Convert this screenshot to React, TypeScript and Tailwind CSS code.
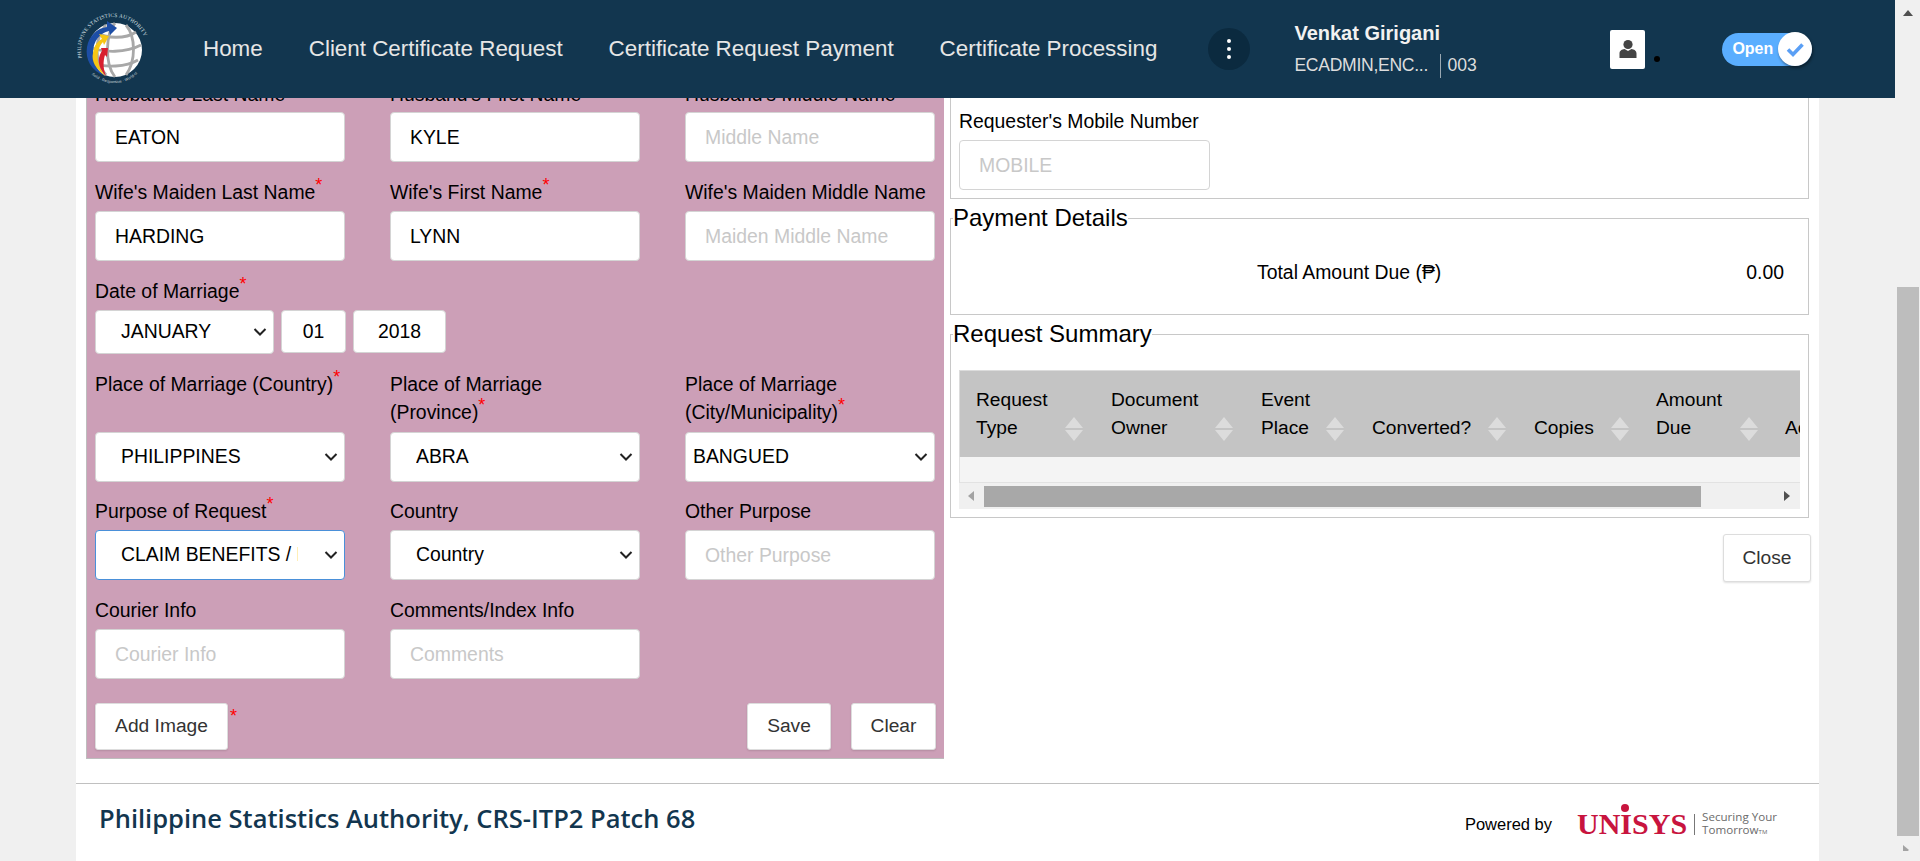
import React from "react";

const sans = "font-['Liberation_Sans',Arial,sans-serif]";
const fieldCls =
  "h-[50px] w-[250px] rounded-[4px] border border-[#d4d4d4] bg-white pl-[19px] text-[19.4px] text-black outline-none placeholder:text-[#c8c8c8]";
const btnCls =
  "h-[47px] rounded-[3px] border border-[#dddddd] bg-white text-[19.2px] text-[#333333] shadow-[0_1px_2px_rgba(0,0,0,0.12)]";

function Star() {
  return <span className="relative -top-[8px] text-[18px] leading-none text-[#ff0000]">*</span>;
}

function Label({ text, req, className = "" }: { text: React.ReactNode; req?: boolean; className?: string }) {
  return (
    <label className={"block text-[19.4px] leading-[28px] text-black " + className}>
      {text}
      {req && <Star />}
    </label>
  );
}

// native look of the old chrome select arrow, drawn so it has the right size
function Select({ value, className = "", box = "w-[250px] h-[50px]", border = "border-[#d4d4d4]", pad = "pl-[25px]" }: {
  value: string;
  className?: string;
  box?: string;
  border?: string;
  pad?: string;
}) {
  return (
    <div className={"relative " + box + " " + className}>
      <select
        className={"h-full w-full appearance-none rounded-[4px] border bg-white pr-[46px] text-[19.4px] text-black outline-none " + border + " " + pad}
        defaultValue={value}
      >
        <option>{value}</option>
      </select>
      <svg viewBox="0 0 14 9" className="pointer-events-none absolute top-1/2 right-[7px] h-[9px] w-[14px] -translate-y-1/2">
        <path d="M1.5 1.5 L7 7 L12.5 1.5" fill="none" stroke="#222222" strokeWidth="2" />
      </svg>
    </div>
  );
}

function PsaLogo() {
  return (
    <svg viewBox="0 0 76 76" className="h-[76px] w-[76px] shrink-0">
      <defs>
        <path id="psaTop" d="M6 47 A33 33 0 1 1 70 47" />
        <path id="psaBottom" d="M14 62 A33.5 33.5 0 0 0 62 62" />
      </defs>
      <circle cx="39" cy="39" r="27" fill="#ffffff" />
      <g fill="none" stroke="#a8a8a8" strokeWidth="2.8">
        <path d="M20 21 C30 28 50 28 60 21" />
        <path d="M13 36 C28 42 50 42 65 34" />
        <path d="M16 52 C30 57 50 56 62 49" />
        <path d="M39 12 C30 22 28 52 39 66" />
        <path d="M50 14 C60 26 60 50 50 64" />
        <path d="M30 14 C18 28 18 50 30 64" />
      </g>
      <path d="M29 65 C15 60 9 48 11 36 C13 24 22 17 31 16 L31 10 L41 17 L34 24 L33 20 C24 22 17 30 17 42 C17 52 22 60 29 65Z" fill="#1d4ea6" />
      <path d="M29 65 C20 58 15 50 17 42 C18 34 22 30 26 28 L23 23 L33 25 L28 34 L27 31 C22 36 21 44 22 50 C23 56 26 61 29 65Z" fill="#f7c614" />
      <path d="M30 65 C24 59 22 52 23 47 C24 43 25 41 26 40 L25 37 L32 37 L31 46 L29 44 C27 50 27 58 30 65Z" fill="#d8202f" />
      <text fontSize="5.3" fill="#dfe5e8" fontFamily="'Liberation Serif',serif" letterSpacing="0.25">
        <textPath href="#psaTop">PHILIPPINE STATISTICS AUTHORITY</textPath>
      </text>
      <text fontSize="3.9" fill="#c8d2d8" fontFamily="'Liberation Sans',sans-serif">
        <textPath href="#psaBottom" startOffset="4%">Solid · Responsive · World-class</textPath>
      </text>
    </svg>
  );
}

function Header() {
  return (
    <header className="flex h-[98px] shrink-0 items-center bg-[#12364f] pl-[76px]">
      <PsaLogo />
      <nav className="ml-[51px] flex gap-[46px] text-[22.4px] whitespace-nowrap text-[#e6e6e6]">
        <span>Home</span>
        <span>Client Certificate Request</span>
        <span>Certificate Request Payment</span>
        <span>Certificate Processing</span>
      </nav>
      <div className="ml-[51px] flex h-[42px] w-[42px] shrink-0 flex-col items-center justify-center gap-[4px] rounded-full bg-[#0b2a3f]">
        <i className="h-[4px] w-[4px] rounded-full bg-white" />
        <i className="h-[4px] w-[4px] rounded-full bg-white" />
        <i className="h-[4px] w-[4px] rounded-full bg-white" />
      </div>
      <div className="ml-[44px] w-[316px] shrink-0">
        <div className="text-[20px] leading-[24px] font-bold text-[#f2f2f2]">Venkat Girigani</div>
        <div className="mt-[9px] flex h-[24px] items-center text-[17.6px] whitespace-nowrap text-[#dddddd]">
          <span className="w-[137px] overflow-hidden tracking-[-0.3px]">ECADMIN,ENC...</span>
          <span className="ml-[9px] h-[24px] w-px bg-[#9aa8b2]" />
          <span className="ml-[6px]">003</span>
        </div>
      </div>
      <div className="flex h-[39px] w-[35px] shrink-0 items-center justify-center rounded-[2px] bg-white">
        <svg viewBox="0 0 18 20" className="h-[20px] w-[18px]">
          <circle cx="9" cy="5.5" r="4.6" fill="#444444" />
          <path d="M0.5 19 V14.5 C0.5 11.5 3 10.5 5.5 10 L9 12 L12.5 10 C15 10.5 17.5 11.5 17.5 14.5 V19Z" fill="#444444" />
        </svg>
      </div>
      <i className="mt-[20px] ml-[9px] h-[6px] w-[6px] shrink-0 rounded-full bg-black" />
      <div className="relative ml-[62px] flex h-[33px] w-[90px] shrink-0 items-center rounded-full bg-[#5aaeff] pl-[10px] text-[16px] font-bold text-white">
        Open
        <span className="absolute top-[-1px] right-0 flex h-[34px] w-[34px] items-center justify-center rounded-full bg-white shadow-[1px_2px_3px_rgba(0,0,0,0.45)]">
          <svg viewBox="0 0 20 20" className="h-[20px] w-[20px]">
            <path d="M3 10.5 L8 15.5 L17.5 5.5" fill="none" stroke="#5a9ff5" strokeWidth="3.6" />
          </svg>
        </span>
      </div>
    </header>
  );
}

function RequestForm() {
  return (
    <section className="h-[661px] w-[858px] shrink-0 border-b border-l border-[#bdbdbd] bg-[#cc9fb7] pl-[8px]">
      <div className="-mt-[18px] grid grid-cols-[250px_250px_250px] gap-x-[45px]">
        <Label text="Husband's Last Name" />
        <Label text="Husband's First Name" />
        <Label text="Husband's Middle Name" />
        <input className={"mt-[4px] " + fieldCls} defaultValue="EATON" />
        <input className={"mt-[4px] " + fieldCls} defaultValue="KYLE" />
        <input className={"mt-[4px] " + fieldCls} placeholder="Middle Name" />

        <Label text="Wife's Maiden Last Name" req className="mt-[16px]" />
        <Label text="Wife's First Name" req className="mt-[16px]" />
        <Label text="Wife's Maiden Middle Name" className="mt-[16px] whitespace-nowrap" />
        <input className={"mt-[5px] " + fieldCls} defaultValue="HARDING" />
        <input className={"mt-[5px] " + fieldCls} defaultValue="LYNN" />
        <input className={"mt-[5px] " + fieldCls} placeholder="Maiden Middle Name" />
      </div>

      <Label text="Date of Marriage" req className="mt-[16px]" />
      <div className="mt-[5px] flex items-start gap-[7px]">
        <Select value="JANUARY" box="h-[44px] w-[179px]" />
        <input className="h-[43px] w-[65px] rounded-[4px] border border-[#d4d4d4] bg-white text-center text-[19.4px] text-black outline-none" defaultValue="01" />
        <input className="h-[43px] w-[93px] rounded-[4px] border border-[#d4d4d4] bg-white text-center text-[19.4px] text-black outline-none" defaultValue="2018" />
      </div>

      <div className="mt-[16px] grid grid-cols-[250px_250px_250px] gap-x-[45px]">
        <Label text="Place of Marriage (Country)" req className="h-[56px] whitespace-nowrap" />
        <Label text={<>Place of Marriage<br />(Province)</>} req className="h-[56px]" />
        <Label text={<>Place of Marriage<br />(City/Municipality)</>} req className="h-[56px]" />
        <Select value="PHILIPPINES" className="mt-[6px]" />
        <Select value="ABRA" className="mt-[6px]" />
        <Select value="BANGUED" className="mt-[6px]" pad="pl-[7px]" />

        <Label text="Purpose of Request" req className="mt-[15px]" />
        <Label text="Country" className="mt-[15px]" />
        <Label text="Other Purpose" className="mt-[15px]" />
        <Select value="CLAIM BENEFITS / LOAN" className="mt-[5px]" border="border-[#4a90d9]" />
        <Select value="Country" className="mt-[5px]" />
        <input className={"mt-[5px] " + fieldCls} placeholder="Other Purpose" />

        <Label text="Courier Info" className="mt-[16px]" />
        <Label text="Comments/Index Info" className="mt-[16px]" />
        <span />
        <input className={"mt-[5px] " + fieldCls} placeholder="Courier Info" />
        <input className={"mt-[5px] " + fieldCls} placeholder="Comments" />
      </div>

      <div className="mt-[24px] flex items-start pr-[8px]">
        <button className={"w-[133px] " + btnCls}>Add Image</button>
        <span className="mt-[4px] ml-[2px] text-[18px] leading-none text-[#ff0000]">*</span>
        <button className={"ml-auto w-[84px] " + btnCls}>Save</button>
        <button className={"ml-[20px] w-[85px] " + btnCls}>Clear</button>
      </div>
    </section>
  );
}

const columns = [
  { lines: ["Request", "Type"], cell: "w-[135px]", text: "w-[89px]" },
  { lines: ["Document", "Owner"], cell: "w-[150px]", text: "w-[104px]" },
  { lines: ["Event", "Place"], cell: "w-[111px]", text: "w-[65px]" },
  { lines: ["", "Converted?"], cell: "w-[162px]", text: "w-[116px]" },
  { lines: ["", "Copies"], cell: "w-[122px]", text: "w-[77px]" },
  { lines: ["Amount", "Due"], cell: "w-[129px]", text: "w-[84px]" },
];

function SortIcon() {
  return (
    <svg viewBox="0 0 18 24" className="mb-[1px] h-[24px] w-[18px] shrink-0">
      <path d="M9 0 L18 11 H0Z M0 13 H18 L9 24Z" fill="#dcdcdc" />
    </svg>
  );
}

function RequestSummary() {
  return (
    <fieldset className="mt-[5px] mr-[2px] min-w-0 border border-[#c8c8c8] pb-[8px]">
      <legend className="ml-[2px] text-[24px] leading-[28px] text-black">Request Summary</legend>
      <div className="mx-[8px] mt-[22px] overflow-hidden bg-[#f0f0f0]">
        <div className="flex h-[87px] items-end overflow-hidden border-t border-l border-[#dcdcdc] bg-[#c4c4c4] pb-[15px] pl-[16px] text-[19.2px] leading-[28px] whitespace-nowrap text-black">
          {columns.map((c) => (
            <div key={c.lines[1]} className={"flex shrink-0 items-end " + c.cell}>
              <div className={c.text}>
                <div>{c.lines[0]}</div>
                <div>{c.lines[1]}</div>
              </div>
              <SortIcon />
            </div>
          ))}
          <div className="shrink-0">Action</div>
        </div>
        <div className="h-[26px] border-b border-l border-[#e2e2e2] bg-[#f4f4f4]" />
        <div className="flex h-[26px] items-center">
          <svg viewBox="0 0 6 10" className="ml-[9px] h-[10px] w-[6px] shrink-0">
            <path d="M6 0 V10 L0 5Z" fill="#a3a3a3" />
          </svg>
          <div className="ml-[10px] h-[21px] w-[717px] bg-[#a8a8a8]" />
          <svg viewBox="0 0 6 10" className="mr-[10px] ml-auto h-[10px] w-[6px] shrink-0">
            <path d="M0 0 V10 L6 5Z" fill="#505050" />
          </svg>
        </div>
      </div>
    </fieldset>
  );
}

function SidePanel() {
  return (
    <aside className="ml-[6px] w-[861px] shrink-0">
      <div className="mr-[2px] h-[101px] border-r border-b border-l border-[#c8c8c8] pt-[9px] pl-[8px]">
        <Label text="Requester's Mobile Number" />
        <input className="mt-[5px] h-[50px] w-[251px] rounded-[4px] border border-[#d4d4d4] bg-white pl-[19px] text-[19.4px] outline-none placeholder:text-[#c8c8c8]" placeholder="MOBILE" />
      </div>

      <fieldset className="mt-[5px] mr-[2px] h-[111px] min-w-0 border border-[#c8c8c8]">
        <legend className="ml-[2px] text-[24px] leading-[28px] text-black">Payment Details</legend>
        <div className="flex h-[82px] items-center justify-between pr-[24px] pl-[306px] text-[19.4px] text-black">
          <span>Total Amount Due (₱)</span>
          <span>0.00</span>
        </div>
      </fieldset>

      <RequestSummary />

      <div className="mt-[16px] flex justify-end">
        <button className={"h-[48px] w-[88px] rounded-[3px] border border-[#dddddd] bg-white text-[19.2px] text-[#333333] shadow-[0_1px_2px_rgba(0,0,0,0.12)]"}>Close</button>
      </div>
    </aside>
  );
}

function Footer() {
  return (
    <footer className="flex h-[78px] shrink-0 items-center border-t border-[#c0c0c0] pb-[9px] pl-[23px]">
      <div className="font-['Open_Sans',sans-serif] text-[25.5px] font-semibold whitespace-nowrap text-[#12364f]">
        Philippine Statistics Authority, CRS-ITP2 Patch 68
      </div>
      <div className="ml-auto flex items-center pt-[12px] pr-[42px]">
        <span className="text-[16.5px] text-black">Powered by</span>
        <span className="relative ml-[25px] font-['Liberation_Serif',serif] text-[30px] leading-[30px] font-bold text-[#c8143e]">
          UNISYS
          <i className="absolute top-[-5px] left-[44px] h-[8px] w-[8px] rounded-full bg-[#c8143e]" />
        </span>
        <span className="mx-[7px] h-[21px] w-px bg-[#777777]" />
        <span className="font-['Open_Sans',sans-serif] text-[11.6px] leading-[13px] text-[#6b6b6b]">
          Securing Your
          <br />
          Tomorrow<span className="text-[6px]">TM</span>
        </span>
      </div>
    </footer>
  );
}

export default function App() {
  return (
    <div className={"flex h-screen w-full overflow-hidden bg-[#f0f0f0] " + sans}>
      <div className="flex w-[1895px] shrink-0 flex-col">
        <Header />
        <main className="mx-[76px] flex flex-1 flex-col bg-white">
          <div className="flex h-[685px] shrink-0 overflow-hidden pl-[10px]">
            <RequestForm />
            <SidePanel />
          </div>
          <Footer />
        </main>
      </div>
      <div className="flex w-[25px] shrink-0 flex-col items-center">
        <svg viewBox="0 0 10 6" className="mt-[10px] h-[6px] w-[10px] shrink-0">
          <path d="M5 0 L10 6 H0Z" fill="#505050" />
        </svg>
        <div className="mt-[271px] h-[549px] w-[22px] shrink-0 bg-[#bdbdbd]" />
        <svg viewBox="0 0 10 6" className="mt-[9px] h-[6px] w-[10px] shrink-0">
          <path d="M0 0 V10 L6 5Z" fill="#a3a3a3" />
        </svg>
      </div>
    </div>
  );
}
